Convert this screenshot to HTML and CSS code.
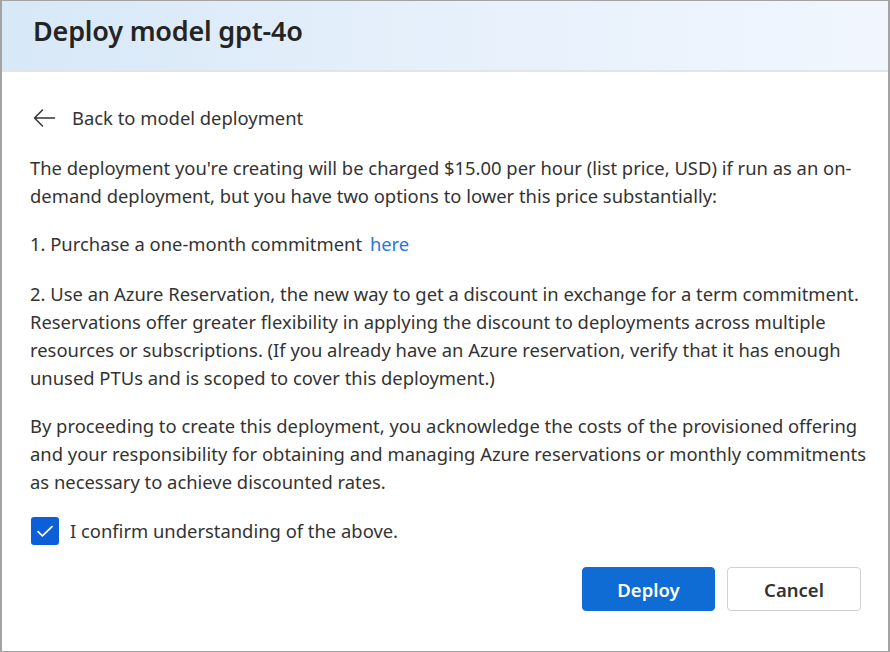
FILE: index.html
```html
<!DOCTYPE html>
<html lang="en">
<head>
<meta charset="utf-8">
<title>Deploy model gpt-4o</title>
<link rel="stylesheet" href="styles.css">
</head>
<body>
<div class="frame">
  <header class="header">
    <h1 class="title">Deploy model gpt-4o</h1>
  </header>
  <main class="content">
    <a class="back" href="#">
      <svg class="back-icon" width="24" height="20" viewBox="0 0 24 20" aria-hidden="true">
        <path d="M22.5 10H2.5M10.5 2L2.5 10l8 8" fill="none" stroke="#333" stroke-width="1.5" stroke-linecap="round" stroke-linejoin="round"/>
      </svg>
      <span>Back to model deployment</span>
    </a>
    <p class="para">The deployment you're creating will be charged $15.00 per hour (list price, USD) if run as an on-demand deployment, but you have two options to lower this price substantially:</p>
    <p class="para para-option">1. Purchase a one-month commitment <a class="link" href="#">here</a></p>
    <p class="para">2. Use an Azure Reservation, the new way to get a discount in exchange for a term commitment. Reservations offer greater flexibility in applying the discount to deployments across multiple resources or subscriptions. (If you already have an Azure reservation, verify that it has enough unused PTUs and is scoped to cover this deployment.)</p>
    <p class="para para-last">By proceeding to create this deployment, you acknowledge the costs of the provisioned offering and your responsibility for obtaining and managing Azure reservations or monthly commitments as necessary to achieve discounted rates.</p>
    <label class="confirm">
      <span class="checkbox">
        <svg width="18" height="18" viewBox="0 0 18 18" aria-hidden="true">
          <path d="M2 9.6l4.4 4.2L16 4.6" fill="none" stroke="#fff" stroke-width="1.7" stroke-linecap="round" stroke-linejoin="round"/>
        </svg>
      </span>
      <span>I confirm understanding of the above.</span>
    </label>
    <div class="actions">
      <button class="btn btn-primary">Deploy</button>
      <button class="btn btn-secondary">Cancel</button>
    </div>
  </main>
</div>
</body>
</html>
```
FILE: styles.css
```css
html, body {
  margin: 0;
  padding: 0;
  background: #ffffff;
}
.frame {
  width: 890px;
  height: 652px;
  box-sizing: border-box;
  border: 1px solid #a3a3a3;
  border-left-width: 2px;
  border-right-width: 2px;
  display: flex;
  flex-direction: column;
  font-family: "Segoe UI", "Noto Sans", sans-serif;
  color: #333333;
  overflow: hidden;
}
.header {
  height: 71px;
  flex: 0 0 71px;
  box-sizing: border-box;
  border-bottom: 2px solid #e1e4e8;
  background: linear-gradient(90deg, #d7e8f7 0%, #e6f0fb 50%, #f1f6fe 100%);
  padding: 12px 0 0 31px;
}
.title {
  margin: 0;
  font-size: 27px;
  line-height: 36px;
  font-weight: 600;
  color: #242424;
  letter-spacing: -0.2px;
}
.content {
  padding: 32px 16px 0 28px;
  display: flex;
  flex-direction: column;
  font-size: 18.4px;
  line-height: 28px;
}
.back {
  display: flex;
  align-items: center;
  gap: 16px;
  text-decoration: none;
  color: #333333;
  margin-left: 2px;
  margin-bottom: 22px;
}
.para {
  margin: 0 0 20px 0;
}
.para-option {
  margin-bottom: 22px;
}
.para-last {
  margin-bottom: 21px;
}
.link {
  color: #1f78dc;
  text-decoration: none;
  margin-left: 3px;
}
.confirm {
  display: flex;
  align-items: center;
  gap: 11px;
  margin-left: 1px;
}
.checkbox {
  width: 28px;
  height: 28px;
  box-sizing: border-box;
  border-radius: 3px;
  background: #0d5fd9;
  display: flex;
  align-items: center;
  justify-content: center;
}
.actions {
  display: flex;
  justify-content: flex-end;
  gap: 12px;
  margin-top: 22px;
  padding-right: 11px;
}
.btn {
  height: 44px;
  width: 134px;
  border-radius: 4px;
  font-family: inherit;
  font-size: 18.5px;
  font-weight: 600;
  cursor: pointer;
}
.btn-primary {
  background: #0f6cd4;
  color: #ffffff;
  border: 1px solid #0f6cd4;
  width: 133px;
}
.btn-secondary {
  background: #ffffff;
  color: #333333;
  border: 1px solid #d1d1d1;
}
```
